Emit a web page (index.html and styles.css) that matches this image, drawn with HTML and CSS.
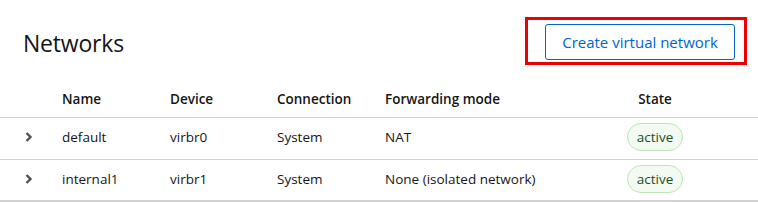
FILE: index.html
```html
<!DOCTYPE html>
<html lang="en">
<head>
<meta charset="utf-8">
<title>Networks</title>
<link rel="stylesheet" href="styles.css">
</head>
<body>
<div class="page">
  <div class="toolbar">
    <h1 class="title">Networks</h1>
    <span class="highlight">
      <button class="btn-secondary" type="button">Create virtual network</button>
    </span>
  </div>
  <div class="table">
    <div class="row head">
      <div class="cell toggle"></div>
      <div class="cell">Name</div>
      <div class="cell">Device</div>
      <div class="cell">Connection</div>
      <div class="cell">Forwarding mode</div>
      <div class="cell center">State</div>
    </div>
    <div class="row body">
      <div class="cell toggle"><svg class="chev" viewBox="0 0 8 12" width="8" height="12"><path d="M1.5 2 L5.5 6 L1.5 10" fill="none" stroke="#4f5255" stroke-width="2.4"/></svg></div>
      <div class="cell">default</div>
      <div class="cell">virbr0</div>
      <div class="cell">System</div>
      <div class="cell">NAT</div>
      <div class="cell center"><span class="label">active</span></div>
    </div>
    <div class="row body last">
      <div class="cell toggle"><svg class="chev" viewBox="0 0 8 12" width="8" height="12"><path d="M1.5 2 L5.5 6 L1.5 10" fill="none" stroke="#4f5255" stroke-width="2.4"/></svg></div>
      <div class="cell">internal1</div>
      <div class="cell">virbr1</div>
      <div class="cell">System</div>
      <div class="cell">None (isolated network)</div>
      <div class="cell center"><span class="label">active</span></div>
    </div>
  </div>
</div>
</body>
</html>
```
FILE: styles.css
```css
* { box-sizing: border-box; }
html, body { margin: 0; padding: 0; background: #fff; }
body {
  font-family: "Open Sans", "Noto Sans", sans-serif;
  color: #151515;
  width: 758px;
  height: 203px;
  overflow: hidden;
}
.toolbar {
  display: flex;
  justify-content: space-between;
  align-items: center;
  padding: 17px 11px 0 23px;
  height: 65px;
}
.title {
  margin: 0;
  font-size: 23px;
  font-weight: 400;
  line-height: 1;
  letter-spacing: -0.2px;
  padding-top: 4px;
}
.highlight {
  display: inline-block;
  border: 3px solid #ee0000;
  padding: 4px 9px 2px 17px;
}
.btn-secondary {
  display: block;
  width: 190px;
  height: 36px;
  background: #fff;
  border: 1px solid #0066cc;
  border-radius: 3px;
  color: #0066cc;
  font-family: inherit;
  font-size: 15px;
  padding: 0;
  cursor: pointer;
}
.table { margin-top: 16px; }
.row {
  display: grid;
  grid-template-columns: 62px 108px 107px 108px 1fr 140px 33px;
  align-items: center;
}
.row.head {
  height: 37px;
  font-weight: 600;
  font-size: 13.5px;
  border-bottom: 1px solid #d2d2d2;
  padding-bottom: 1px;
}
.row.body {
  height: 42px;
  font-size: 13.5px;
  border-bottom: 1px solid #d2d2d2;
  padding-bottom: 3px;
}
.row.body.last { border-bottom: 2px solid #d2d2d2; }
.cell { white-space: nowrap; }
.cell.center { text-align: center; }
.toggle { padding-left: 25px; display: flex; align-items: center; }
.chev { display: block; }
.label {
  display: inline-block;
  background: #f3faf2;
  border: 1px solid #bde5b8;
  color: #1e4f18;
  border-radius: 30px;
  height: 28px;
  line-height: 26px;
  padding: 0 9px;
  font-size: 13.5px;
}
```
